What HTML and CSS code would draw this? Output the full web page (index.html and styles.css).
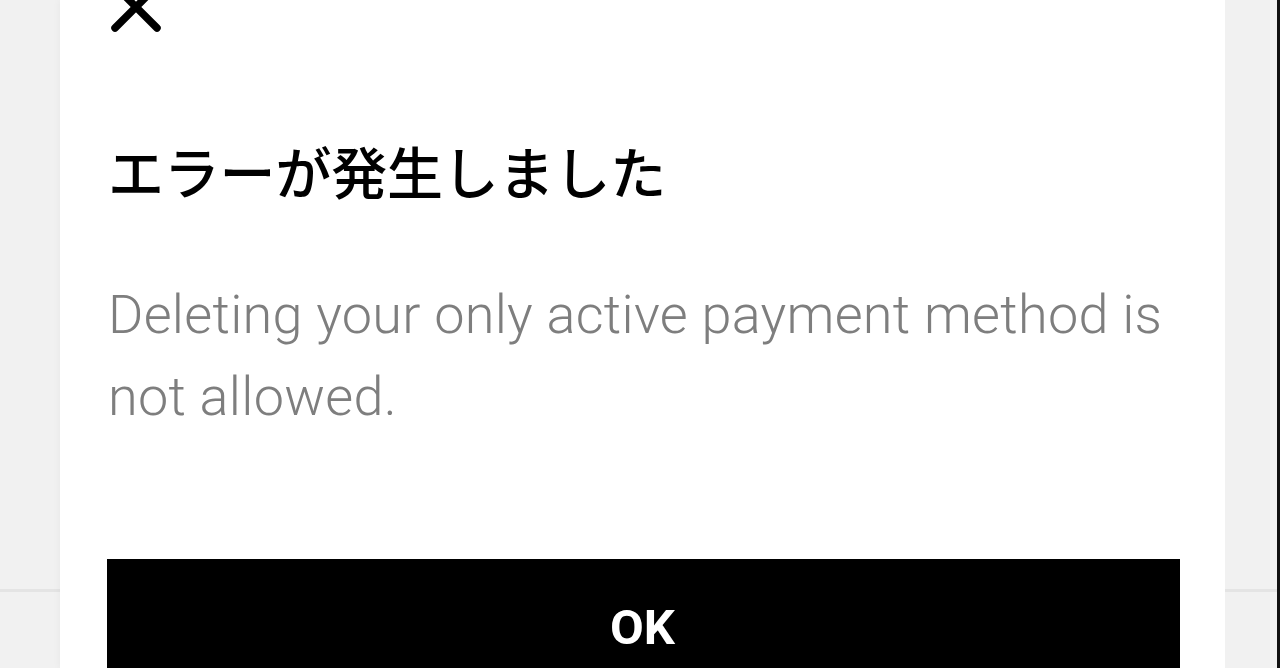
FILE: index.html
```html
<!DOCTYPE html>
<html lang="ja">
<head>
<meta charset="utf-8">
<title>エラー</title>
<link rel="stylesheet" href="styles.css">
</head>
<body>
<div class="page">
  <div class="gutter gutter-left"></div>
  <div class="modal">
    <button class="close" aria-label="閉じる">
      <svg width="50" height="50" viewBox="0 0 50 50" aria-hidden="true">
        <path d="M4 4 L46 46 M46 4 L4 46" stroke="#000" stroke-width="7.5" stroke-linecap="round" fill="none"/>
      </svg>
    </button>
    <h1 class="title">エラーが発生しました</h1>
    <p class="message">Deleting your only active payment method is not allowed.</p>
    <button class="ok">OK</button>
  </div>
  <div class="gutter gutter-right"></div>
  <div class="edge"></div>
</div>
</body>
</html>
```

FILE: styles.css
```css
html, body {
  margin: 0;
  padding: 0;
  height: 100%;
  overflow: hidden;
}

body {
  background: #ffffff;
  font-family: Roboto, "Noto Sans CJK JP", sans-serif;
}

.page {
  display: flex;
  height: 668px;
  width: 1280px;
}

.gutter {
  background: linear-gradient(to bottom, #f1f1f1 0, #f1f1f1 589px, #e4e4e4 589px, #e4e4e4 592px, #f1f1f1 592px, #f1f1f1 100%);
}

.gutter-left {
  width: 60px;
}

.gutter-right {
  width: 52px;
}

.edge {
  width: 3px;
  background: #111;
}

.modal {
  flex: 1;
  background: #fff;
  padding: 0 45px 0 47px;
  display: flex;
  flex-direction: column;
  align-items: flex-start;
  box-shadow: 0 0 8px rgba(0, 0, 0, 0.05);
}

.close {
  margin: -18px 0 0 4px;
  padding: 0;
  border: 0;
  background: none;
  width: 50px;
  height: 50px;
  display: block;
}

.close svg {
  display: block;
}

.title {
  margin: 98px 0 0 1px;
  font-family: "Noto Sans CJK JP", sans-serif;
  font-weight: 500;
  font-size: 56px;
  line-height: 80px;
  color: #000;
  letter-spacing: -0.2px;
}

.message {
  margin: 64px 0 0 1px;
  font-family: Roboto, sans-serif;
  font-weight: 300;
  font-size: 54px;
  line-height: 82px;
  color: #7e7e7e;
  letter-spacing: 0.28px;
}

.ok {
  margin-top: 121px;
  align-self: stretch;
  height: 136px;
  flex-shrink: 0;
  background: #000;
  color: #fff;
  border: 0;
  font-family: Roboto, sans-serif;
  font-weight: 700;
  font-size: 49px;
  padding: 0 2px 0 0;
  text-align: center;
}
```
